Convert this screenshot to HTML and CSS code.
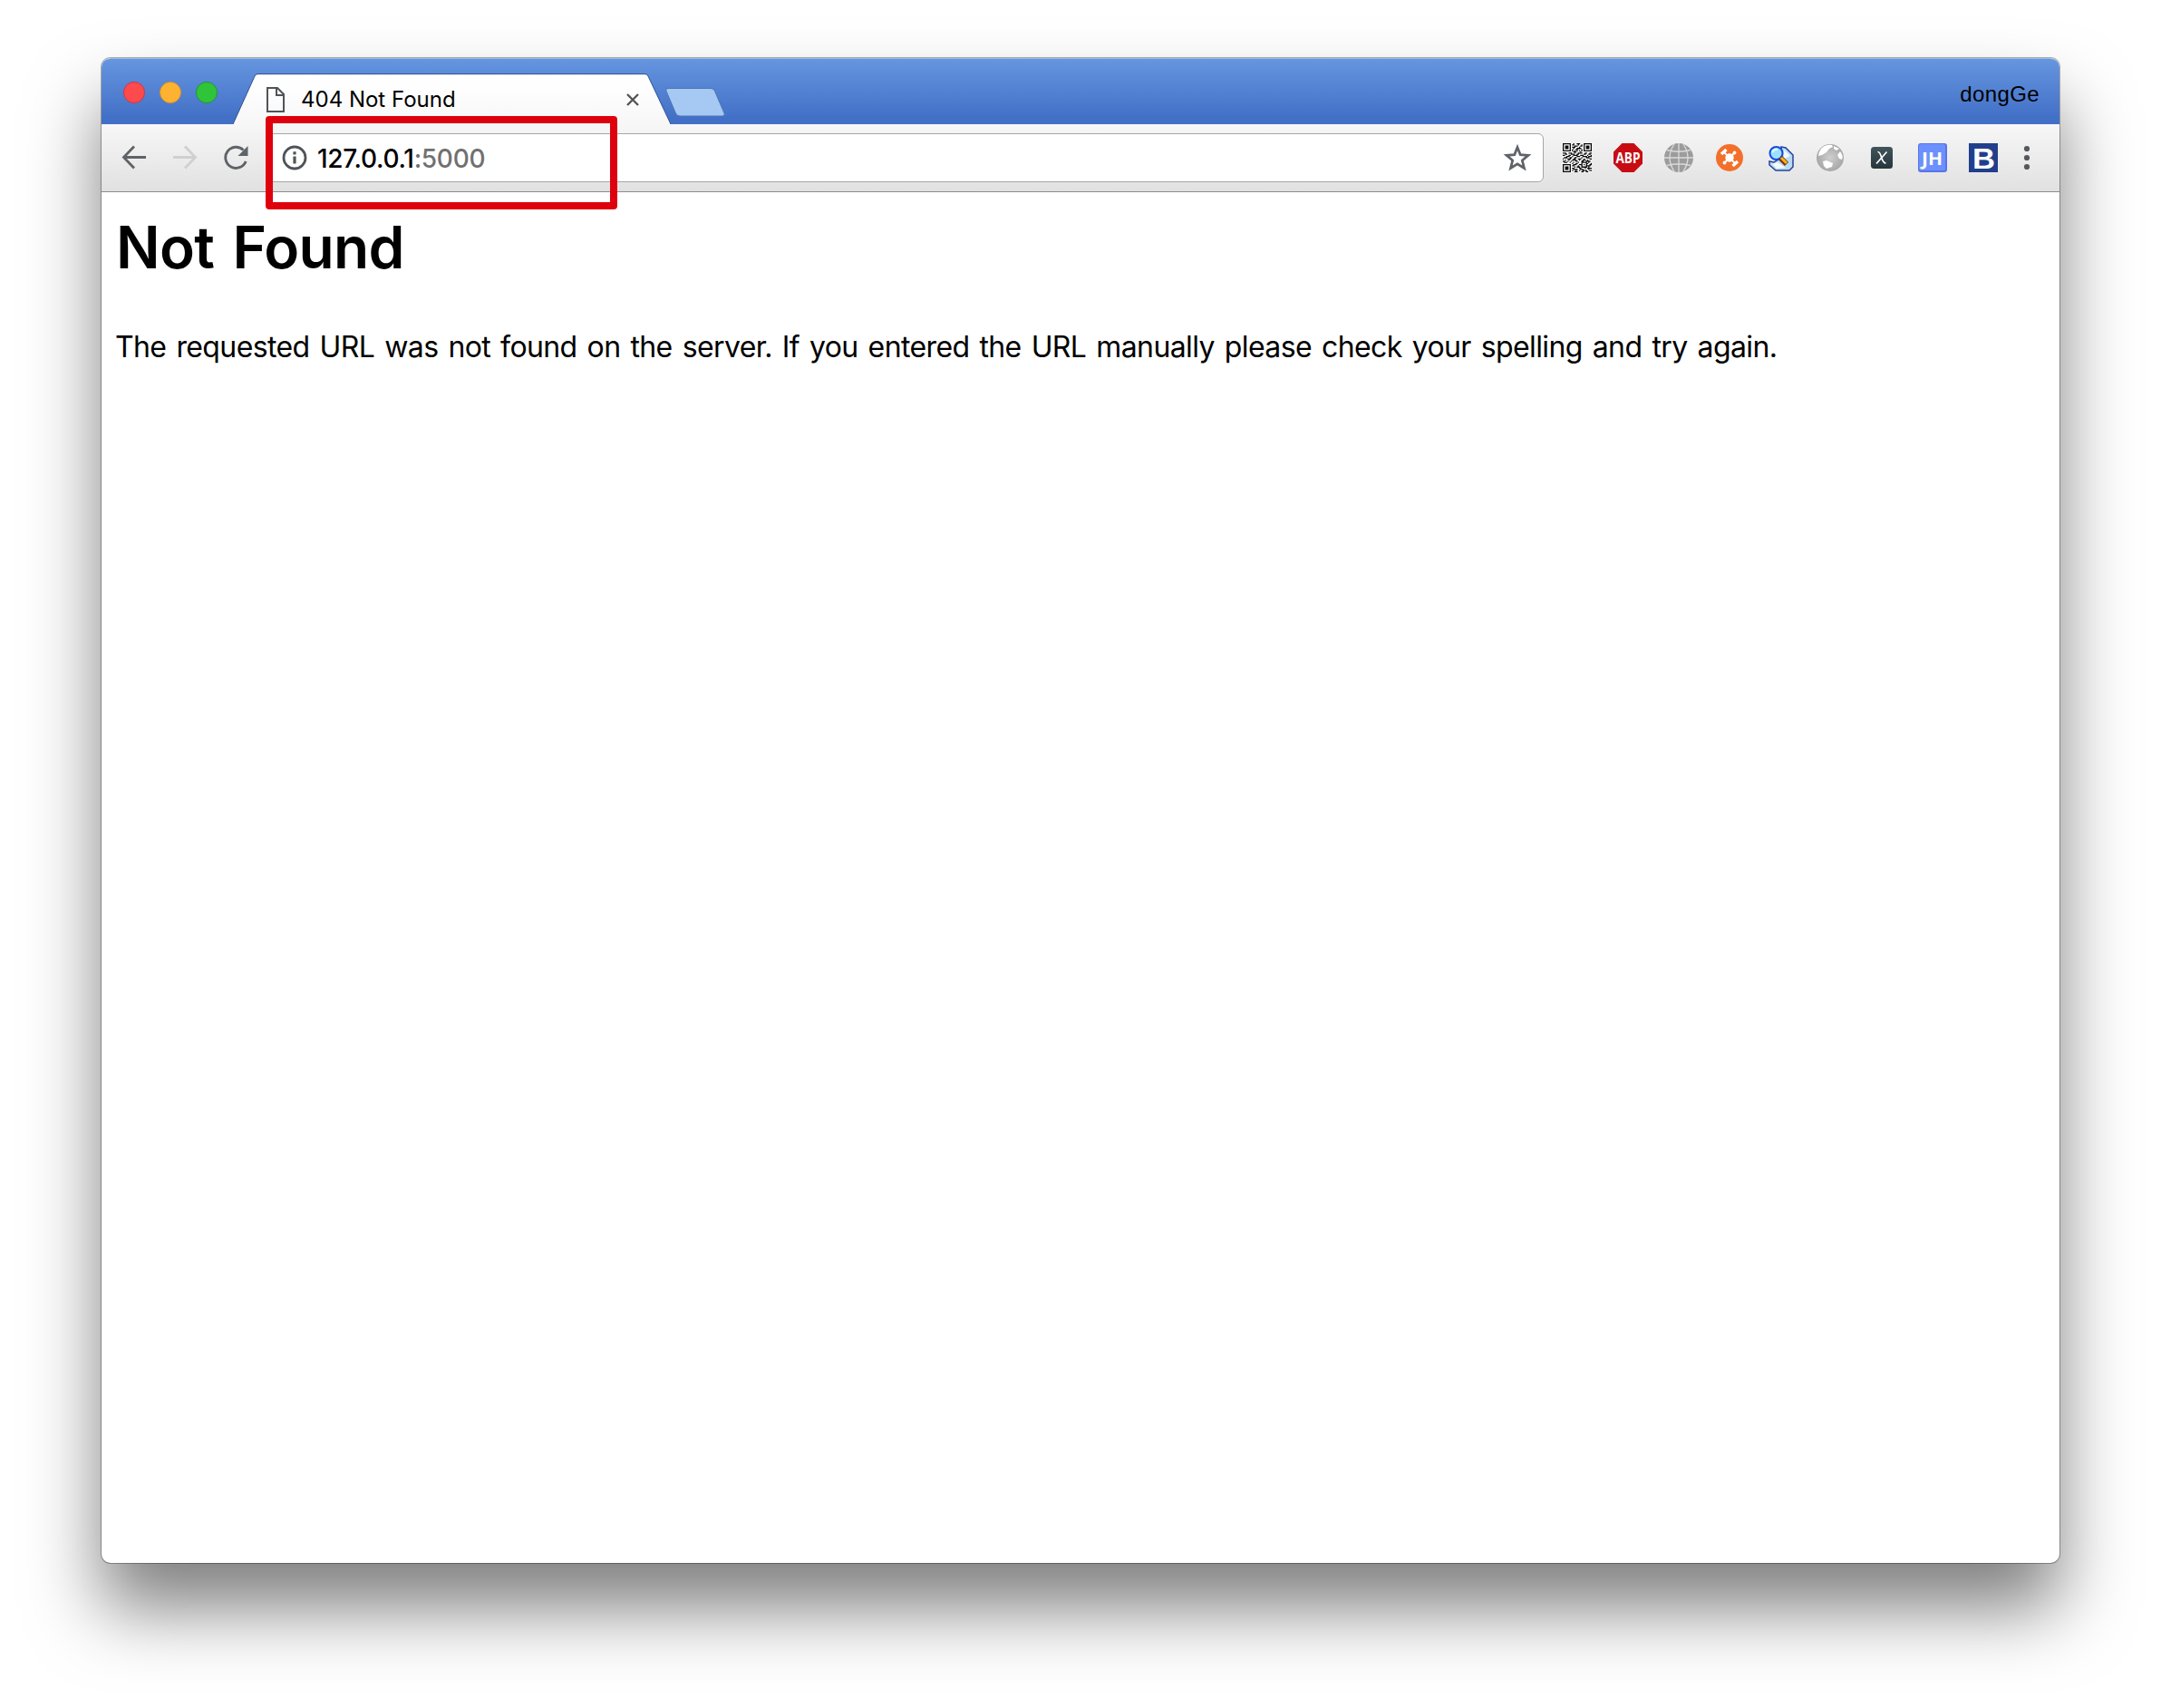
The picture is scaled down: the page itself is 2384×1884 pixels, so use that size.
FILE: index.html
```html
<!DOCTYPE html>
<html lang="en">
<head>
<meta charset="utf-8">
<title>404 Not Found</title>
<link rel="stylesheet" href="styles.css">
</head>
<body>
<div class="window">
  <header class="tabstrip">
    <div class="lights"><i class="light close"></i><i class="light minimize"></i><i class="light zoom"></i></div>
    <div class="tab">
      <svg class="tab-shape" width="486" height="56" viewBox="0 0 486 56">
        <defs><linearGradient id="tabfill" x1="0" y1="0" x2="0" y2="1"><stop offset="0" stop-color="#fff"/><stop offset=".3" stop-color="#fefefe"/><stop offset="1" stop-color="#f7f7f7"/></linearGradient></defs>
        <path d="M1 56 25 3Q26 1 28 1H456Q458 1 459 3L484 56Z" fill="url(#tabfill)"/>
        <path d="M1 56 25 3Q26 .7 28 .7H456Q458 .7 459 3L484 56" fill="none" stroke="#2f5390" stroke-width="1"/>
      </svg>
      <svg class="page-icon" width="20" height="28" viewBox="0 0 20 28"><path d="M1 1H12L19 8V27H1ZM11 1V9H19" fill="none" stroke="#505357" stroke-width="2"/></svg>
      <span class="tab-title">404 Not Found</span>
      <svg class="tab-close" width="14" height="14" viewBox="0 0 14 14"><path d="M1 1 13 13M13 1 1 13" stroke="#555" stroke-width="2.4"/></svg>
    </div>
    <svg class="new-tab" width="68" height="34" viewBox="0 0 68 34"><path d="M4 1.5H51Q54 1.5 55.500 4.500L66 29Q67 32 64 32H17Q14 32 12.500 29L2 4.500Q1 1.500 4 1.500Z" fill="#a5c9f3" stroke="#4f76b5"/></svg>
    <span class="profile">dongGe</span>
  </header>
  <nav class="toolbar">
    <div class="nav-buttons">
      <svg width="28" height="28" viewBox="0 0 28 28"><path d="M27 13.500H3M14 1.500 2.500 13.500 14 25.500" fill="none" stroke="#5f6368" stroke-width="2.800"/></svg>
      <svg width="28" height="28" viewBox="0 0 28 28"><path d="M1 13.500H25M14 1.500 25.500 13.500 14 25.500" fill="none" stroke="#cfd0d1" stroke-width="2.800"/></svg>
      <svg width="28" height="28" viewBox="0 0 28 28"><path d="M22.500 5.500A11.600 11.600 0 1 0 25.200 18" fill="none" stroke="#5f6368" stroke-width="2.900"/><path d="M27.500 1V12H16.500Z" fill="#5f6368"/></svg>
    </div>
    <div class="omnibox">
      <svg class="info" width="28" height="28" viewBox="0 0 28 28"><circle cx="14" cy="14" r="12" fill="none" stroke="#505458" stroke-width="2.800"/><path d="M14 7.300V10.500M14 12.500V20.500" stroke="#505458" stroke-width="3.200"/></svg>
      <span class="url">127.0.0.1<span class="port">:5000</span></span>
      <svg class="star" width="30" height="30" viewBox="0 0 30 30"><path d="M15 3.500 18.200 11.600 27 12.300 20.300 17.900 22.500 26.500 15 21.800 7.500 26.500 9.700 17.900 3 12.300 11.800 11.600Z" fill="none" stroke="#5f6368" stroke-width="2.700"/></svg>
    </div>
    <div class="extensions">
      <svg viewBox="0 0 25 25"><path fill="#fff" d="M0 0H25V25H0Z"/>
        <g fill="none" stroke="#080808"><path d="M.5.5H6.500V6.500H.5ZM18.500.5H24.500V6.500H18.500ZM.5 18.500H6.500V24.500H.5Z"/>
        <path d="M9 .5H10M12 .5H15M8 1.500H10M13 1.500H14M16 1.500H17M10 2.500H13M15 2.500H17M8 3.500H11M14 3.500H15M9 4.500H10M12 4.500H16M8 5.500H9M11 5.500H13M16 5.500H17M8 6.500H9M10 6.500H11M12 6.500H13M14 6.500H15M16 6.500H17M9 7.500H12M15 7.500H16"/>
        <path d="M0 8.500H3M5 8.500H8M10 8.500H11M13 8.500H17M19 8.500H21M23 8.500H25M2 9.500H4M7 9.500H10M12 9.500H14M18 9.500H20M22 9.500H24M0 10.500H2M5 10.500H7M9 10.500H13M15 10.500H18M21 10.500H22M24 10.500H25M3 11.500H6M8 11.500H9M12 11.500H15M17 11.500H21M22 11.500H25M1 12.500H4M6 12.500H8M10 12.500H12M16 12.500H17M20 12.500H23M0 13.500H1M4 13.500H7M9 13.500H11M13 13.500H16M18 13.500H19M23 13.500H25M2 14.500H3M5 14.500H6M8 14.500H12M14 14.500H15M17 14.500H20M21 14.500H22M0 15.500H2M4 15.500H5M7 15.500H8M11 15.500H13M16 15.500H18M20 15.500H24M1 16.500H4M6 16.500H7M9 16.500H10M13 16.500H14M16 16.500H21M22 16.500H23"/>
        <path d="M8 17.500H9M11 17.500H13M16 17.500H17M20 17.500H22M24 17.500H25M9 18.500H12M14 18.500H17M18 18.500H19M20 18.500H21M23 18.500H25M8 19.500H10M13 19.500H14M16 19.500H17M20 19.500H24M10 20.500H11M12 20.500H15M16 20.500H21M22 20.500H23M8 21.500H10M14 21.500H16M19 21.500H20M21 21.500H25M9 22.500H13M15 22.500H18M22 22.500H23M8 23.500H9M11 23.500H12M14 23.500H15M17 23.500H21M23 23.500H25M10 24.500H13M16 24.500H18M20 24.500H22"/></g>
        <path fill="#080808" d="M2 2H5V5H2ZM20 2H23V5H20ZM2 20H5V23H2Z"/></svg>
      <svg viewBox="0 0 32 32"><path d="M9.500 0H22.500L32 9.500V22.500L22.500 32H9.500L0 22.500V9.500Z" fill="#c70d13"/><text x="16" y="21.800" textLength="27" lengthAdjust="spacingAndGlyphs" text-anchor="middle" class="abp">ABP</text></svg>
      <svg viewBox="0 0 32 32"><circle cx="16" cy="16" r="16" fill="#9c9c9c"/><path d="M16 0V32M0 16H32M3 7.500Q16 11 29 7.500M3 24.500Q16 21 29 24.500M11 1Q1 16 11 31M21 1Q31 16 21 31" fill="none" stroke="#dadada" stroke-width="1.300"/></svg>
      <svg viewBox="0 0 32 32"><circle cx="16" cy="16" r="15" fill="#f3702b"/><circle cx="16" cy="16" r="4.700" fill="#fff"/><path d="M10 10 22 22M22 10 10 22" stroke="#fff" stroke-width="1.800"/><path d="M7 12 12.500 7M19.500 25 25 20" stroke="#fff" stroke-width="3.400"/><circle cx="21.500" cy="10.500" r="1.900" fill="#fff"/><circle cx="10.500" cy="21.500" r="1.900" fill="#fff"/></svg>
      <svg viewBox="0 0 32 32"><path d="M17 4 22 5 30 13V26L26 30H11L4 24V20L9 21L18 15Z" fill="#b9dcf2" stroke="#26439a" stroke-width="1.500"/><path d="M20 7 27 14 20 17ZM7 23 13 21 22 27 12 28Z" fill="#f4fbff"/><circle cx="11.500" cy="11" r="7" fill="#9ce1ff" stroke="#174be0" stroke-width="2"/><path d="M7 10Q9 6 13 7" stroke="#e5faff" stroke-width="2" fill="none"/><path d="M16 16 23 23" stroke="#7c3310" stroke-width="6"/><path d="M17 16 23 22" stroke="#f8b31c" stroke-width="3"/></svg>
      <svg viewBox="0 0 32 32"><defs><radialGradient id="globe"><stop offset="0" stop-color="#cfcfcf"/><stop offset="1" stop-color="#a7a7a7"/></radialGradient></defs><circle cx="15" cy="16" r="15" fill="url(#globe)"/><path d="M5 6Q10 1 17 2L18 4 14 6 11 10 6 13 2 14Q2 10 5 6ZM19 3 25 6 22 8 19 6ZM26 9Q30 14 28 18L25 17 23 13ZM7 20 11 19 18 22 17 26 11 28 8 25Z" fill="#fff"/></svg>
      <svg viewBox="0 0 32 32"><defs><linearGradient id="dark" x2="0" y2="1"><stop stop-color="#40545a"/><stop offset="1" stop-color="#25363b"/></linearGradient></defs><rect x="4" y="4" width="24" height="24" rx="3.500" fill="url(#dark)"/><path d="M11.500 9.500C16 9 15 22 20.500 22M21.500 9.500 10 22.500" fill="none" stroke="#fff" stroke-width="1.700"/></svg>
      <svg viewBox="0 0 32 32"><rect width="32" height="32" rx="3" fill="#5975e4"/><rect x="1" y="1" width="29" height="29" rx="2" fill="#6c90ff"/><text x="15.500" y="23.500" textLength="23" lengthAdjust="spacingAndGlyphs" text-anchor="middle" class="jh">JH</text></svg>
      <svg viewBox="0 0 32 32"><path d="M0 0H32V32H0Z" fill="#213f8c"/><text x="16.500" y="27.500" textLength="25" lengthAdjust="spacingAndGlyphs" text-anchor="middle" class="bold-b">B</text></svg>
    </div>
    <svg class="menu" width="8" height="28" viewBox="0 0 8 28" fill="#55595d"><circle cx="4" cy="4" r="3.100"/><circle cx="4" cy="14" r="3.100"/><circle cx="4" cy="24" r="3.100"/></svg>
  </nav>
  <main class="page">
    <h1>Not Found</h1>
    <p>The requested URL was not found on the server. If you entered the URL manually please check your spelling and try again.</p>
  </main>
  <div class="highlight"></div>
</div>
</body>
</html>
```
FILE: styles.css
```css
* { box-sizing: border-box; }
html, body { margin: 0; height: 100%; }
body { background: #fff; padding: 64px 112px 160px; overflow: hidden; color: #000; font-family: Inter, "Liberation Sans", sans-serif; }
svg { display: block; flex: none; overflow: visible; }
.window { position: relative; height: 1660px; display: flex; flex-direction: column; background: #fff; border-radius: 10px; box-shadow: 0 0 0 1px rgba(0,0,0,.3), 0 50px 80px rgba(0,0,0,.5); }
.tabstrip { height: 73px; flex: none; display: flex; align-items: flex-end; background: linear-gradient(#6596df, #4370c7 90%); border-radius: 10px 10px 0 0; border-top: 1px solid #9dbce4; }
.lights { display: flex; gap: 16px; align-self: flex-start; padding: 25px 0 0 24px; width: 144px; }
.light { width: 24px; height: 24px; border-radius: 50%; border: 1px solid; }
.close { background: #fc4a4d; border-color: #d4343f; }
.minimize { background: #fdb331; border-color: #d0922f; }
.zoom { background: #30c43a; border-color: #229633; }
.tab { position: relative; width: 486px; height: 56px; display: flex; align-items: flex-start; padding: 15px 0 0 38px; }
.tab-shape { position: absolute; left: 0; top: 0; }
.page-icon, .tab-title, .tab-close { position: relative; }
.tab-title { margin-left: 18px; width: 359px; font: 24px/28px Inter, sans-serif; white-space: nowrap; }
.tab-close { margin-top: 7px; }
.new-tab { align-self: flex-start; margin: 31px 0 0 -9px; }
.profile { margin: 0 22px 0 auto; align-self: flex-start; padding-top: 25px; font: 24px/28px "Liberation Sans", sans-serif; letter-spacing: .4px; }
.toolbar { height: 75px; flex: none; display: flex; align-items: flex-start; background: linear-gradient(#f7f7f7, #e1e1e1); border-bottom: 1px solid #8c8c8c; padding: 10px 32px 0 22px; }
.nav-buttons { display: flex; gap: 28px; padding: 13px 0 0; width: 160px; }
.omnibox { flex: 1; height: 54px; display: flex; align-items: center; background: #fff; border: 1px solid #a6a6a6; border-radius: 6px; padding: 0 13px 0 15px; }
.info { margin-left: .5px; }
.url { flex: 1; margin-left: 11.5px; padding-top: 1px; font: 450 28px/34px Inter, sans-serif; letter-spacing: -.28px; }
.port { color: #707070; }
.extensions { display: flex; gap: 24px; margin: 11px 28px 0 21px; }
.extensions svg { width: 32px; height: 32px; }
.abp { font: bold 16px/1 "Open Sans", sans-serif; fill: #fff; }
.jh { font: bold 20px/1 "Noto Sans", sans-serif; fill: #fffdf0; }
.bold-b { font: bold 31px/1 "Liberation Sans", sans-serif; fill: #fff; }
.menu { margin-top: 13px; }
.page { flex: 1; padding: 21px 16px; }
h1 { margin: 0; font: 600 64px/80px Inter, sans-serif; letter-spacing: -.7px; word-spacing: 5px; }
p { margin: 47px 0 0 -1px; font: 32px/46px Inter, sans-serif; letter-spacing: -.61px; word-spacing: 2.6px; white-space: nowrap; }
.highlight { position: absolute; left: 181px; top: 64px; width: 388px; height: 103px; border: 8px solid #df000d; border-radius: 4px; }
```
